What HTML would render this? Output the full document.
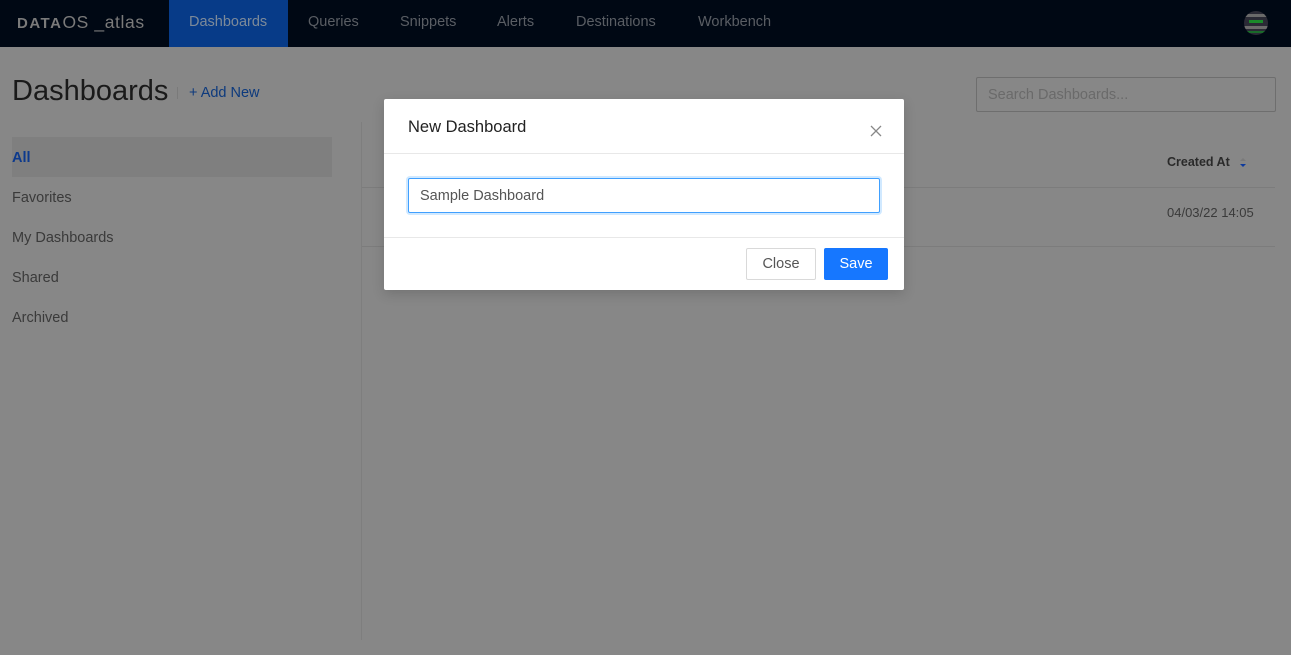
<!DOCTYPE html>
<html><head><meta charset="utf-8"><style>
*{box-sizing:border-box;margin:0;padding:0}
body{width:1291px;height:655px;background:#878787;font-family:"Liberation Sans",sans-serif;position:relative;overflow:hidden}
.nav{position:absolute;left:0;top:0;width:1291px;height:47px;background:#000814}
.logo{position:absolute;left:17px;top:12px;color:#7a7a7a;font-size:17.5px;letter-spacing:0.6px}
.logo b{font-weight:900;letter-spacing:1.5px;font-size:15px}
.nav a{position:absolute;top:0;height:47px;line-height:44px;color:#5a5e64;font-size:14.5px;text-decoration:none}
.nav a.act{background:#073b88;color:#7d8a99;padding:0 20px}
.t{position:absolute;white-space:nowrap}
</style></head><body>
<div class="nav">
<div class="logo"><b>DATA</b>OS _atlas</div>
<a class="act" style="left:169px;width:119px">Dashboards</a>
<a style="left:308px">Queries</a>
<a style="left:400px">Snippets</a>
<a style="left:497px">Alerts</a>
<a style="left:576px">Destinations</a>
<a style="left:698px">Workbench</a>
<svg style="position:absolute;left:1241px;top:7px" width="30" height="32" viewBox="0 0 30 32">
<defs><clipPath id="c"><circle cx="15" cy="16" r="12"/></clipPath></defs>
<g clip-path="url(#c)">
<rect x="0" y="0" width="30" height="32" fill="#2a2a35"/>
<rect x="0" y="7" width="30" height="3" fill="#6a6a6a"/>
<rect x="8" y="13" width="14" height="3" fill="#1a8a2a"/>
<rect x="0" y="19" width="30" height="3" fill="#6a6a6a"/>
<rect x="0" y="24" width="30" height="2" fill="#1a6a2a"/>
</g></svg>
</div>
<div class="t" style="left:12px;top:75px;font-size:29px;color:#1a1a1a">Dashboards</div>
<div style="position:absolute;left:177px;top:87px;width:1px;height:12px;background:#7a7a7a"></div>
<div class="t" style="left:189px;top:85px;font-size:14.5px;color:#0d3a7d">+ Add New</div>
<div style="position:absolute;left:976px;top:77px;width:300px;height:35px;border:1px solid #6e6e6e;border-radius:2px"></div>
<div class="t" style="left:988px;top:87px;font-size:14.5px;color:#6a6a6a">Search Dashboards...</div>
<div style="position:absolute;left:12px;top:137px;width:320px;height:40px;background:#7f7f7f"></div>
<div class="t" style="left:12px;top:150px;font-size:14.5px;color:#0d3a8d;font-weight:bold">All</div>
<div class="t" style="left:12px;top:190px;font-size:14.5px;color:#3a3a3a">Favorites</div>
<div class="t" style="left:12px;top:230px;font-size:14.5px;color:#3a3a3a">My Dashboards</div>
<div class="t" style="left:12px;top:270px;font-size:14.5px;color:#3a3a3a">Shared</div>
<div class="t" style="left:12px;top:310px;font-size:14.5px;color:#3a3a3a">Archived</div>
<div style="position:absolute;left:361px;top:122px;width:1px;height:518px;background:#7e7e7e"></div>
<div style="position:absolute;left:362px;top:187px;width:913px;height:1px;background:#7c7c7c"></div>
<div style="position:absolute;left:362px;top:246px;width:913px;height:1px;background:#7c7c7c"></div>
<div class="t" style="left:1167px;top:155px;font-size:12.5px;color:#2a2a2a;font-weight:bold">Created At</div>
<svg style="position:absolute;left:1239px;top:157px" width="8" height="12"><path d="M1 4L4 1L7 4Z" fill="#7a7a7a"/><path d="M1 7L4 10L7 7Z" fill="#0d3a9d"/></svg>
<div class="t" style="left:1167px;top:205px;font-size:13px;color:#3a3a3a">04/03/22 14:05</div>
<div style="position:absolute;left:384px;top:99px;width:520px;height:191px;background:#fff;border-radius:2px;box-shadow:0 4px 12px rgba(0,0,0,.15)">
<div class="t" style="left:24px;top:19px;font-size:16.5px;color:#222">New Dashboard</div>
<svg style="position:absolute;left:486px;top:26px" width="12" height="12"><path d="M1 1L11 11M11 1L1 11" stroke="#888" stroke-width="1.3"/></svg>
<div style="position:absolute;left:0;top:54px;width:520px;height:1px;background:#e8e8e8"></div>
<div style="position:absolute;left:24px;top:79px;width:472px;height:35px;border:1px solid #40a0ff;border-radius:2px;box-shadow:0 0 0 2px rgba(24,144,255,.2)"></div>
<div class="t" style="left:36px;top:89px;font-size:14.5px;color:#555">Sample Dashboard</div>
<div style="position:absolute;left:0;top:138px;width:520px;height:1px;background:#e8e8e8"></div>
<div style="position:absolute;left:362px;top:149px;width:70px;height:32px;border:1px solid #d9d9d9;border-radius:2px;text-align:center;line-height:31px;font-size:14.5px;color:#555">Close</div>
<div style="position:absolute;left:440px;top:149px;width:64px;height:32px;background:#1677ff;border-radius:2px;text-align:center;line-height:32px;font-size:14.5px;color:#fff">Save</div>
</div>
</body></html>
